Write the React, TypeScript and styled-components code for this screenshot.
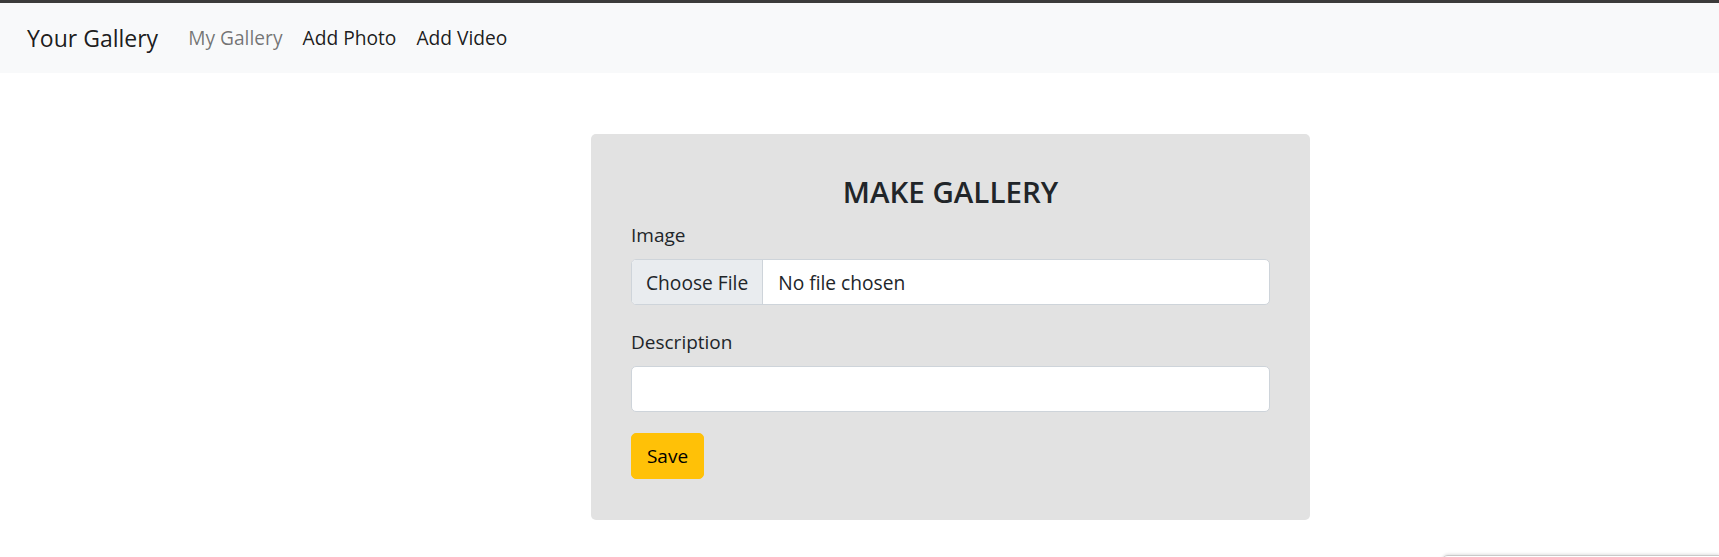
import React from "react";
import styled, { createGlobalStyle } from "styled-components";

const GlobalStyle = createGlobalStyle`
  html, body {
    margin: 0;
    padding: 0;
    background: #ffffff;
  }
  body {
    font-family: "Open Sans", "Noto Sans", "Liberation Sans", sans-serif;
    color: #212529;
    -webkit-font-smoothing: antialiased;
  }
  * { box-sizing: border-box; }
`;

const Page = styled.div`
  min-height: 557px;
  border-top: 3px solid #3b3b3b;
`;

const Navbar = styled.nav`
  height: 70px;
  background: #f8f9fa;
  display: flex;
  align-items: center;
  padding: 0 0 0 27px;
`;

const Brand = styled.a`
  font-size: 23px;
  line-height: 1.5;
  color: rgba(0, 0, 0, 0.9);
  text-decoration: none;
  margin-right: 30px;
  margin-top: 1px;
`;

const NavList = styled.ul`
  display: flex;
  list-style: none;
  margin: 0;
  padding: 0;
  gap: 20px;
`;

const NavLink = styled.a<{ $muted?: boolean }>`
  font-size: 19.2px;
  line-height: 1.5;
  text-decoration: none;
  color: ${(p) => (p.$muted ? "rgba(0, 0, 0, 0.55)" : "rgba(0, 0, 0, 0.9)")};
`;

const Main = styled.main`
  padding: 61px 0 0 591px;
`;

const Card = styled.form`
  width: 719px;
  background: #e2e2e2;
  border-radius: 5px;
  padding: 38px 40px 41px 40px;
  display: flex;
  flex-direction: column;
`;

const Title = styled.h3`
  margin: 0 0 9px 0;
  text-align: center;
  font-size: 29.5px;
  line-height: 40px;
  font-weight: 600;
  color: #212529;
`;

const Field = styled.div<{ $gap?: number }>`
  display: flex;
  flex-direction: column;
  margin-bottom: ${(p) => p.$gap ?? 0}px;
`;

const Label = styled.label`
  font-size: 19px;
  line-height: 29px;
  margin-bottom: 9px;
  color: #212529;
`;

const FileBox = styled.div`
  display: flex;
  height: 46px;
  border: 1px solid #ced4da;
  border-radius: 5px;
  background: #ffffff;
  overflow: hidden;
  font-size: 19.2px;
`;

const FileButton = styled.span`
  display: flex;
  align-items: center;
  padding: 0 14px;
  background: #e9ecef;
  border-right: 1px solid #ced4da;
  color: #212529;
`;

const FileName = styled.span`
  display: flex;
  align-items: center;
  padding: 0 15px;
  color: #212529;
`;

const TextInput = styled.input`
  height: 46px;
  border: 1px solid #ced4da;
  border-radius: 5px;
  background: #ffffff;
  font: inherit;
  font-size: 19.2px;
  padding: 0 14px;
  outline: none;
`;

const SaveButton = styled.button`
  align-self: flex-start;
  height: 46px;
  width: 73px;
  padding: 0;
  background: #ffc107;
  border: 1px solid #ffc107;
  border-radius: 5px;
  color: #000000;
  font: inherit;
  font-size: 19px;
  cursor: pointer;
`;

const PeekPanel = styled.div`
  position: fixed;
  left: 1442px;
  right: 0;
  top: 555px;
  height: 20px;
  background: #ffffff;
  border-top: 1px solid #c9c9c9;
  border-top-left-radius: 6px;
  box-shadow: 0 -1px 3px rgba(0, 0, 0, 0.12);
`;

export default function App() {
  return (
    <Page>
      <GlobalStyle />
      <Navbar>
        <Brand href="#">Your Gallery</Brand>
        <NavList>
          <li>
            <NavLink href="#" $muted>
              My Gallery
            </NavLink>
          </li>
          <li>
            <NavLink href="#">Add Photo</NavLink>
          </li>
          <li>
            <NavLink href="#">Add Video</NavLink>
          </li>
        </NavList>
      </Navbar>
      <Main>
        <Card onSubmit={(e) => e.preventDefault()}>
          <Title>MAKE GALLERY</Title>
          <Field $gap={23}>
            <Label>Image</Label>
            <FileBox>
              <FileButton>Choose File</FileButton>
              <FileName>No file chosen</FileName>
            </FileBox>
          </Field>
          <Field $gap={21}>
            <Label>Description</Label>
            <TextInput type="text" />
          </Field>
          <SaveButton type="submit">Save</SaveButton>
        </Card>
      </Main>
      <PeekPanel />
    </Page>
  );
}
